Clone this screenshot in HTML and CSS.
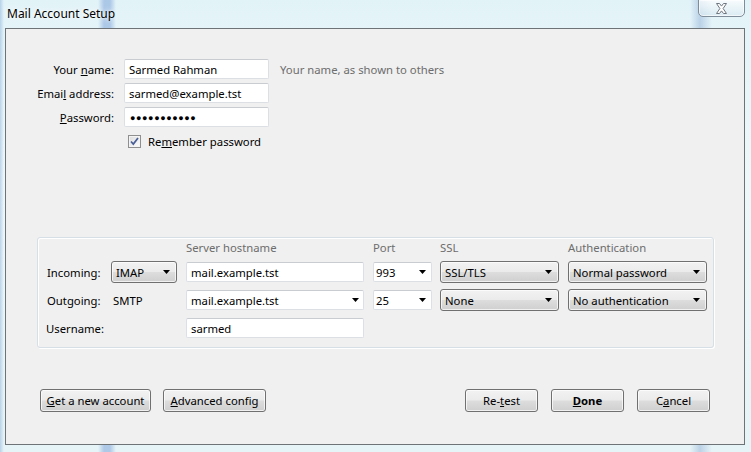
FILE: index.html
```html
<!DOCTYPE html>
<html lang="en">
<head>
  <meta charset="UTF-8" />
  <title>Mail Account Setup</title>
  <link rel="stylesheet" href="styles.css">
</head>
<body>
  <div class="window">
    <div class="titlebar">
      <span class="title">Mail Account Setup</span>
      <button class="close" aria-label="Close">
        <svg width="13" height="11" viewBox="0 0 13 11">
          <path d="M1.5 0.5h3l2 2.6 2-2.6h3l-3.4 5 3.4 5h-3l-2-2.6-2 2.6h-3l3.4-5z" fill="#fff" stroke="#6f7680" stroke-width="1" stroke-linejoin="round"/>
        </svg>
      </button>
    </div>

    <div class="client">
      <div class="identity">
        <label class="label">Your <u>n</u>ame:</label>
        <input class="field" type="text" value="Sarmed Rahman">
        <span class="hint">Your name, as shown to others</span>

        <label class="label">Emai<u>l</u> address:</label>
        <input class="field" type="text" value="sarmed@example.tst">
        <span></span>

        <label class="label"><u>P</u>assword:</label>
        <div class="field password">&#9679;&#9679;&#9679;&#9679;&#9679;&#9679;&#9679;&#9679;&#9679;&#9679;&#9679;</div>
        <span></span>

        <span></span>
        <label class="check">
          <span class="box">
            <svg width="9" height="9" viewBox="0 0 9 9">
              <path d="M1 4.5l2.3 2.6L8 1" fill="none" stroke="#4a5f97" stroke-width="1.7"/>
            </svg>
          </span>
          <span>Re<u>m</u>ember password</span>
        </label>
      </div>

      <div class="servers">
        <span></span>
        <span></span>
        <span class="col-head">Server hostname</span>
        <span class="col-head">Port</span>
        <span class="col-head">SSL</span>
        <span class="col-head">Authentication</span>

        <span class="row-label">Incoming:</span>
        <button class="dropdown type">IMAP<svg class="arrow" width="7" height="4" viewBox="0 0 7 4"><path d="M0 0h7L3.5 4z" fill="#000"/></svg></button>
        <input class="field host" type="text" value="mail.example.tst">
        <div class="field combo port">993<svg class="arrow" width="7" height="4" viewBox="0 0 7 4"><path d="M0 0h7L3.5 4z" fill="#000"/></svg></div>
        <button class="dropdown ssl">SSL/TLS<svg class="arrow" width="7" height="4" viewBox="0 0 7 4"><path d="M0 0h7L3.5 4z" fill="#000"/></svg></button>
        <button class="dropdown auth">Normal password<svg class="arrow" width="7" height="4" viewBox="0 0 7 4"><path d="M0 0h7L3.5 4z" fill="#000"/></svg></button>

        <span class="row-label">Outgoing:</span>
        <span class="protocol">SMTP</span>
        <div class="field combo host">mail.example.tst<svg class="arrow" width="7" height="4" viewBox="0 0 7 4"><path d="M0 0h7L3.5 4z" fill="#000"/></svg></div>
        <div class="field combo port">25<svg class="arrow" width="7" height="4" viewBox="0 0 7 4"><path d="M0 0h7L3.5 4z" fill="#000"/></svg></div>
        <button class="dropdown ssl">None<svg class="arrow" width="7" height="4" viewBox="0 0 7 4"><path d="M0 0h7L3.5 4z" fill="#000"/></svg></button>
        <button class="dropdown auth">No authentication<svg class="arrow" width="7" height="4" viewBox="0 0 7 4"><path d="M0 0h7L3.5 4z" fill="#000"/></svg></button>

        <span class="row-label user">Username:</span>
        <span></span>
        <input class="field host" type="text" value="sarmed">
      </div>

      <div class="actions">
        <div class="button-group">
          <button class="btn wide"><u>G</u>et a new account</button>
          <button class="btn medium"><u>A</u>dvanced config</button>
        </div>
        <div class="button-group">
          <button class="btn">Re-<u>t</u>est</button>
          <button class="btn default"><u>D</u>one</button>
          <button class="btn">C<u>a</u>ncel</button>
        </div>
      </div>
    </div>
  </div>
</body>
</html>
```

FILE: styles.css
```css
* {
  box-sizing: border-box;
}
body {
  margin: 0;
  width: 751px;
  height: 452px;
  overflow: hidden;
  font-family: 'Noto Sans', 'Open Sans', sans-serif;
  font-size: 11.3px;
  color: #000;
  background:
    linear-gradient(90deg, rgba(80, 130, 200, 0.3) 0px, transparent 4px),
    linear-gradient(90deg, transparent 98px, rgba(70, 120, 200, 0.35) 104px, rgba(70, 120, 200, 0.35) 110px, transparent 116px),
    linear-gradient(90deg, transparent 690px, rgba(90, 130, 190, 0.3) 700px, transparent 712px),
    linear-gradient(180deg, #e2f3f8 0%, #eef8fa 40%, #e6f4f7 100%);
}
.window {
  width: 751px;
  height: 452px;
  display: flex;
  flex-direction: column;
}
.titlebar {
  height: 28px;
  display: flex;
  justify-content: space-between;
  align-items: flex-start;
}
.title {
  margin: 6px 0 0 7px;
  font-size: 12px;
  line-height: 16px;
  text-shadow: 0 0 6px #fff, 0 0 3px #fff;
}
.close {
  width: 47px;
  height: 18px;
  margin: -1px 6px 0 0;
  padding: 0;
  border: 1px solid #7f8c99;
  border-radius: 0 0 5px 5px;
  background: linear-gradient(180deg, rgba(255, 255, 255, 0.75), rgba(215, 232, 240, 0.7));
  box-shadow: inset 0 0 0 1px rgba(255, 255, 255, 0.6);
  display: flex;
  align-items: center;
  justify-content: center;
}

/* dialog body */
.client {
  height: 417px;
  margin: 0 6px 0 5px;
  border: 1px solid #6d7377;
  background: #f0f0f0;
  display: flex;
  flex-direction: column;
}
.identity {
  margin-top: 30px;
  display: grid;
  grid-template-columns: 108px 145px auto;
  grid-auto-rows: 20px;
  column-gap: 10px;
  row-gap: 4px;
  align-items: center;
}
.label {
  text-align: right;
  white-space: nowrap;
}
.hint {
  margin-left: 1px;
  color: #6d6d6d;
}
.field {
  height: 20px;
  border: 1px solid #dcdfe4;
  border-top-color: #c9ccd1;
  border-radius: 2px;
  background: #fff;
  font: inherit;
  padding: 0 4px;
  margin: 0;
  outline: none;
  display: flex;
  align-items: center;
}
.password {
  font-size: 9px;
  letter-spacing: 0.6px;
  padding-left: 5px;
}
.check {
  grid-column: 2 / 4;
  display: flex;
  align-items: center;
  gap: 7px;
  margin-left: 4px;
}
.box {
  width: 13px;
  height: 13px;
  border: 1px solid #8f8f8f;
  background: linear-gradient(135deg, #dcdcdc, #fdfdfd);
  box-shadow: inset 0 0 0 1px #f4f4f4;
  display: flex;
  align-items: center;
  justify-content: center;
}

/* server settings group */
.servers {
  margin: 86px 0 0 31px;
  width: 677px;
  height: 111px;
  border: 1px solid #d5dfe5;
  border-radius: 3px;
  box-shadow: inset 1px 1px 0 #fff, 1px 1px 0 #fff;
  padding: 0 0 0 9px;
  display: grid;
  grid-template-columns: 64px 75px 187px 67px 128px 139px;
  grid-template-rows: 18px 24px 24px 24px;
  row-gap: 4px;
  align-items: center;
}
.col-head {
  color: #6d6d6d;
  align-self: end;
  line-height: 16px;
}
.row-label.user {
  margin-left: -1px;
}
.protocol {
  margin-left: 2px;
}
.host {
  width: 178px;
}
.combo {
  justify-content: space-between;
  padding-right: 4px;
}
.port {
  width: 59px;
  padding-left: 2px;
  padding-right: 5px;
}
.dropdown {
  height: 22px;
  border: 1px solid #707070;
  border-radius: 3px;
  background: linear-gradient(180deg, #f2f2f2 0%, #ebebeb 48%, #dddddd 52%, #cfcfcf 100%);
  box-shadow: inset 0 0 0 1px rgba(255, 255, 255, 0.7);
  font: inherit;
  color: #000;
  margin: 0;
  padding: 0 6px 0 4px;
  display: flex;
  align-items: center;
  justify-content: space-between;
}
.type {
  width: 66px;
}
.ssl {
  width: 119px;
}
.auth {
  width: 139px;
}

/* bottom buttons */
.actions {
  margin-top: 41px;
  padding: 0 34px;
  display: flex;
  justify-content: space-between;
}
.button-group {
  display: flex;
  gap: 12px;
}
.btn {
  width: 73px;
  height: 23px;
  border: 1px solid #707070;
  border-radius: 3px;
  background: linear-gradient(180deg, #f2f2f2 0%, #ebebeb 48%, #dddddd 52%, #cfcfcf 100%);
  box-shadow: inset 0 0 0 1px rgba(255, 255, 255, 0.7);
  font: inherit;
  color: #000;
  padding: 0;
}
.btn.wide {
  width: 111px;
}
.btn.medium {
  width: 103px;
}
.btn.default {
  font-weight: bold;
}
.button-group .btn + .btn.default,
.button-group .btn.default + .btn {
  margin-left: 1px;
}
```
